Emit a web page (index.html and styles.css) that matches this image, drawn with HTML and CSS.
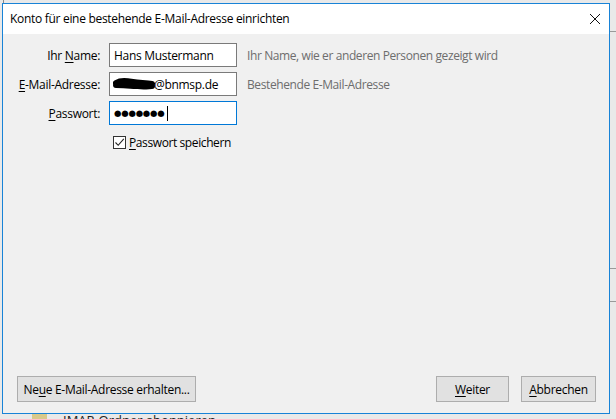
FILE: index.html
```html
<!DOCTYPE html>
<html lang="de">
<head>
  <meta charset="UTF-8">
  <meta name="viewport" content="width=device-width, initial-scale=1.0">
  <title>Konto einrichten</title>
  <link rel="stylesheet" href="styles.css">
</head>
<body>
  <!-- Parts of the main window peeking out behind the dialog -->
  <div class="backdrop">
    <span class="bd-line bd-top"></span>
    <span class="bd-rule bd-r1"></span>
    <span class="bd-rule bd-r2"></span>
    <span class="bd-rule bd-r3"></span>
    <span class="bd-folder"></span>
    <span class="bd-text">IMAP-Ordner abonnieren</span>
  </div>

  <div class="dialog">
    <div class="titlebar">
      <span class="title">Konto für eine bestehende E-Mail-Adresse einrichten</span>
      <svg class="close" width="12" height="12" viewBox="0 0 12 12">
        <path d="M1 1 L11 11 M11 1 L1 11" stroke="#111" stroke-width="1" fill="none"/>
      </svg>
    </div>

    <div class="content">
      <div class="form">
        <label class="lbl">Ihr <u>N</u>ame:</label>
        <div class="field">Hans Mustermann</div>
        <div class="hint">Ihr Name, wie er anderen Personen gezeigt wird</div>

        <label class="lbl"><u>E</u>-Mail-Adresse:</label>
        <div class="field">
          <svg class="scribble" width="42" height="14" viewBox="0 0 42 14">
            <path d="M3 6 C8 3 14 4 20 5 C26 6 33 6 39 7 M3 8 C10 8 18 9 25 9 C31 10 36 9 39 9"
                  stroke="#000" stroke-width="6" stroke-linecap="round" fill="none"/>
          </svg>@bnmsp.de
        </div>
        <div class="hint">Bestehende E-Mail-Adresse</div>

        <label class="lbl"><u>P</u>asswort:</label>
        <div class="field focus"><span class="dots">●●●●●●●</span><span class="caret"></span></div>
        <div></div>

        <div></div>
        <div class="check-row">
          <span class="checkbox">
            <svg width="11" height="11" viewBox="0 0 11 11">
              <path d="M1.5 5.5 L4.2 8.3 L9.8 1.8" stroke="#222" stroke-width="1.1" fill="none"/>
            </svg>
          </span>
          <span><u>P</u>asswort speichern</span>
        </div>
        <div></div>
      </div>

      <div class="buttons">
        <button class="btn btn-wide">Ne<u>u</u>e E-Mail-Adresse erhalten...</button>
        <span class="spacer"></span>
        <button class="btn btn-next"><u>W</u>eiter</button>
        <button class="btn btn-cancel"><u>A</u>bbrechen</button>
      </div>
    </div>
  </div>
</body>
</html>
```

FILE: styles.css
```css
html, body {
  margin: 0;
  padding: 0;
  height: 100%;
  overflow: hidden;
}
body {
  font-family: "Open Sans", "Noto Sans", sans-serif;
  font-size: 12px;
  color: #000;
  background: #e9e9e9;
  position: relative;
}

/* Bits of the main window behind the dialog */
.backdrop {
  position: absolute;
  inset: 0;
  z-index: 0;
}
.bd-line {
  position: absolute;
  background: #8a8a8a;
}
.bd-top {
  left: 3px;
  top: 0;
  width: 1px;
  height: 4px;
}
.bd-rule {
  position: absolute;
  left: 609px;
  width: 7px;
  height: 1px;
  background: #9a9a9a;
}
.bd-r1 { top: 31px; }
.bd-r2 { top: 268px; }
.bd-r3 { top: 301px; }
.bd-folder {
  position: absolute;
  left: 32px;
  top: 414px;
  width: 15px;
  height: 6px;
  background: #d8c98a;
}
.bd-text {
  position: absolute;
  left: 63px;
  top: 412px;
  font-size: 13px;
  line-height: 16px;
  color: #222;
}

/* Dialog window */
.dialog {
  position: relative;
  z-index: 1;
  margin: 3px 0 0 2px;
  width: 608px;
  height: 411px;
  border: 1px solid #1883d7;
  box-sizing: border-box;
  display: flex;
  flex-direction: column;
  background: #f0f0f0;
}
.titlebar {
  height: 30px;
  background: #fff;
  display: flex;
  align-items: center;
  padding: 0 0 0 7px;
  flex-shrink: 0;
}
.title {
  flex: 1;
  letter-spacing: -0.3px;
  margin-top: -1px;
}
.close {
  margin-right: 8px;
}

.content {
  flex: 1;
  display: flex;
  flex-direction: column;
  padding: 9px 12px 11px 14px;
}

.form {
  display: grid;
  grid-template-columns: 83px 128px 1fr;
  column-gap: 9px;
  row-gap: 5px;
  align-items: center;
}
.lbl {
  text-align: right;
  letter-spacing: -0.3px;
}
.lbl u, .check-row u, .btn u {
  text-decoration-thickness: 1px;
  text-underline-offset: 2px;
}
.field {
  height: 24px;
  box-sizing: border-box;
  border: 1px solid #7a7a7a;
  background: #fff;
  padding: 0 4px;
  display: flex;
  align-items: center;
  letter-spacing: -0.3px;
}
.field.focus {
  border-color: #0078d7;
}
.scribble {
  margin-left: -1px;
  margin-right: -1px;
}
.dots {
  font-size: 8.5px;
  letter-spacing: -0.2px;
  font-family: "DejaVu Sans", sans-serif;
}
.caret {
  display: inline-block;
  width: 1px;
  height: 15px;
  background: #000;
  margin-left: 2px;
}
.hint {
  color: #6d6d6d;
  padding-left: 1px;
  letter-spacing: -0.4px;
}

.check-row {
  display: flex;
  align-items: center;
  gap: 3px;
  margin-top: 4px;
  margin-left: 4px;
  letter-spacing: -0.4px;
}
.checkbox {
  width: 13px;
  height: 13px;
  box-sizing: border-box;
  border: 1px solid #333;
  background: #fff;
  display: flex;
  align-items: center;
  justify-content: center;
}

.buttons {
  margin-top: auto;
  display: flex;
  align-items: center;
  gap: 12px;
  padding-right: 1px;
}
.spacer {
  flex: 1;
}
.btn {
  font-family: inherit;
  font-size: 12px;
  height: 26px;
  padding: 0;
  background: #e1e1e1;
  border: 1px solid #adadad;
  color: #000;
  letter-spacing: -0.3px;
  white-space: nowrap;
}
.btn-wide {
  width: 179px;
}
.btn-next {
  width: 73px;
}
.btn-cancel {
  width: 75px;
}
```
